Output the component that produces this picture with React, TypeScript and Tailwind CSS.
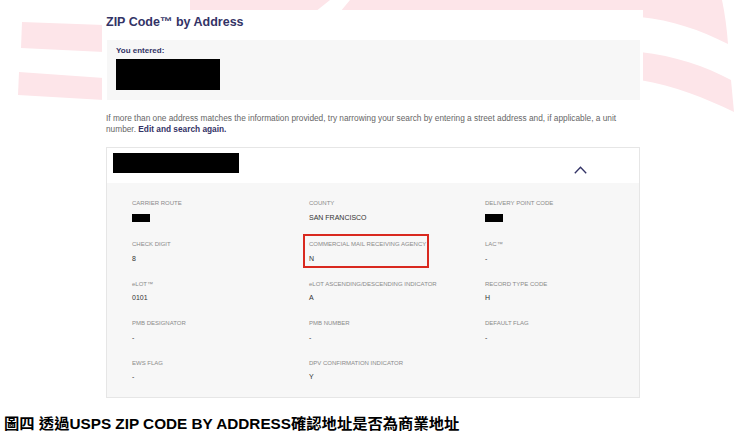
import React from 'react'

type Field = { label: string; value?: string; redacted?: boolean; flagged?: boolean }

const rows: Field[][] = [
  [
    { label: 'CARRIER ROUTE', redacted: true },
    { label: 'COUNTY', value: 'SAN FRANCISCO' },
    { label: 'DELIVERY POINT CODE', redacted: true },
  ],
  [
    { label: 'CHECK DIGIT', value: '8' },
    { label: 'COMMERCIAL MAIL RECEIVING AGENCY', value: 'N', flagged: true },
    { label: 'LAC™', value: '-' },
  ],
  [
    { label: 'eLOT™', value: '0101' },
    { label: 'eLOT ASCENDING/DESCENDING INDICATOR', value: 'A' },
    { label: 'RECORD TYPE CODE', value: 'H' },
  ],
  [
    { label: 'PMB DESIGNATOR', value: '-' },
    { label: 'PMB NUMBER', value: '-' },
    { label: 'DEFAULT FLAG', value: '-' },
  ],
  [
    { label: 'EWS FLAG', value: '-' },
    { label: 'DPV CONFIRMATION INDICATOR', value: 'Y' },
  ],
]

const FieldCell = ({ field }: { field: Field }) => {
  const body = (
    <>
      <div className="text-[6px] leading-[10px] text-[#8a8a8a] whitespace-nowrap">{field.label}</div>
      {field.redacted ? (
        <div className="mt-[6px] mb-[2px] h-[8px] w-[18px] bg-black" />
      ) : (
        <div className="mt-[4.5px] text-[7px] leading-[10px] text-[#333]">{field.value}</div>
      )}
    </>
  )
  if (field.flagged) {
    return (
      <div className="-ml-[6px] -mt-[5px] -mb-[4px] w-[126px] border-2 border-[#d9291f] pl-[4px] pt-[3px] pb-[2px]">
        {body}
      </div>
    )
  }
  return <div>{body}</div>
}

// pale flag stripes behind the page
const FlagBackground = () => (
  <svg className="absolute inset-0" width="740" height="438" viewBox="0 0 740 438">
    <g fill="#fde5e9">
      <path d="M22 22 L104 25 L104 52 L21 48 Z" />
      <path d="M19 72 L104 78 L104 100 L18 95 Z" />
      <path d="M190 0 L330 0 L315 12 L190 12 Z" />
      <path d="M350 0 L722 0 C725 14 727 30 728 44 C700 30 672 20 640 17 L340 12 Z" />
      <path d="M640 52 C675 56 705 66 731 80 L734 112 C705 98 675 86 640 80 Z" />
    </g>
  </svg>
)

export default function App() {
  return (
    <div className="relative w-[740px] h-[438px] overflow-hidden bg-white font-['Liberation_Sans',Arial,sans-serif]">
      <FlagBackground />

      <div className="relative ml-[102px] mt-[10px] w-[541px] bg-white px-[4px] pb-[8px]">
        <h1 className="pt-[3px] text-[12.5px] leading-[18px] font-bold text-[#333366]">ZIP Code™ by Address</h1>

        <div className="mt-[9px] ml-[1px] h-[60px] w-[533px] bg-[#f7f7f7] pl-[9px] pt-[5px]">
          <div className="text-[8px] leading-[12px] font-bold text-[#333366]">You entered:</div>
          <div className="mt-[2px] h-[31px] w-[104px] bg-black" />
        </div>

        <p className="mt-[13px] w-[520px] text-[8.3px] leading-[11px] text-[#666]">
          If more than one address matches the information provided, try narrowing your search by entering a street
          address and, if applicable, a unit number. <span className="font-bold text-[#333366]">Edit and search again.</span>
        </p>

        <div className="mt-[12px] w-[534px] border border-[#e6e6e6]">
          <div className="flex h-[35px] items-start justify-between bg-white pl-[6px] pr-[52px] pt-[5px]">
            <div className="h-[20px] w-[126px] bg-black" />
            <svg className="mt-[13px]" width="13" height="8" viewBox="0 0 13 8" fill="none">
              <path d="M0.8 7.3 L6.5 1.2 L12.2 7.3" stroke="#333366" strokeWidth="1.3" />
            </svg>
          </div>
          <div className="bg-[#f7f7f7] pl-[25px] pt-[15px] pb-[15px]">
            <div className="grid grid-cols-[177px_176px_1fr] gap-y-[15.1px]">
              {rows.map((row, i) =>
                row.map((f, j) => <FieldCell key={`${i}-${j}`} field={f} />)
              )}
            </div>
          </div>
        </div>
      </div>

      <div className="mt-[8px] pl-[4px] text-[15.3px] leading-[20px] font-bold text-black font-['Liberation_Sans','Noto_Sans_CJK_TC',sans-serif]">
        圖四 透過USPS ZIP CODE BY ADDRESS確認地址是否為商業地址
      </div>
    </div>
  )
}
